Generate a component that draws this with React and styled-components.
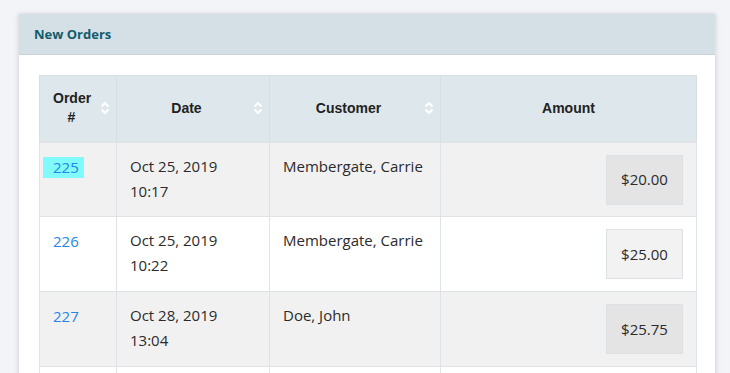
import styled, { createGlobalStyle } from 'styled-components';

const GlobalStyle = createGlobalStyle`
  body {
    margin: 0;
    background-color: #f3f4f8;
    font-family: 'Open Sans', 'Noto Sans', sans-serif;
  }
`;

const Page = styled.div`
  padding: 13px 13px 0 18px;
  height: 373px;
  box-sizing: border-box;
  overflow: hidden;
`;

const Card = styled.div`
  background-color: #fff;
  border: 1px solid #e1e3e6;
  border-bottom: none;
  border-radius: 3px 3px 0 0;
  box-shadow: 0 1px 5px rgba(0, 0, 0, 0.12);
  height: 400px;
  width: 698px;
  box-sizing: border-box;
`;

const CardHeader = styled.div`
  background-color: #d4e0e6;
  height: 41px;
  border-bottom: 1px solid #c7d3d9;
  box-sizing: border-box;
  padding: 0 15px;
  display: flex;
  align-items: center;
  font-size: 13px;
  font-weight: 700;
  color: #135a6b;
`;

const CardBody = styled.div`
  padding: 20px 20px 0 20px;
`;

const Table = styled.table`
  width: 657px;
  border-collapse: collapse;
  table-layout: fixed;
  font-size: 15px;
  color: #2b2b2b;
`;

const Th = styled.th`
  background-color: #dde7ec;
  border: 1px solid #d6dfe4;
  border-bottom: 2px solid #dfe3e8;
  height: 66px;
  padding: ${(props) => (props.sortable ? '0 26px 0 13px' : '0 13px')};
  font-family: 'Liberation Sans', Arial, sans-serif;
  font-size: 14px;
  font-weight: 700;
  color: #222;
  line-height: 19px;
  text-align: center;
  position: relative;
  box-sizing: border-box;
`;

const SortIcon = styled.svg`
  position: absolute;
  right: 6px;
  top: 50%;
  margin-top: -8px;
`;

const Row = styled.tr`
  background-color: ${(props) => (props.striped ? '#f1f1f1' : '#fff')};
`;

const Td = styled.td`
  border: 1px solid #dfe2e6;
  height: 75px;
  box-sizing: border-box;
  padding: 11px 13px 0 13px;
  vertical-align: top;
  line-height: 25px;
  text-align: ${(props) => props.align || 'left'};
`;

const OrderLink = styled.a`
  color: #2585e9;
  text-decoration: none;
  display: inline-block;
  line-height: 21px;
  margin-top: 3px;
  margin-left: ${(props) => (props.highlight ? '-10px' : '0')};
  padding: ${(props) => (props.highlight ? '0 5px 0 10px' : '0')};
  background-color: ${(props) => (props.highlight ? '#80fafa' : 'transparent')};
`;

const AmountButton = styled.div`
  display: inline-flex;
  align-items: center;
  justify-content: center;
  width: 77px;
  height: 50px;
  margin-top: 1px;
  box-sizing: border-box;
  border: 1px solid #dde1e6;
  background-color: rgba(0, 0, 0, 0.05);
  color: #2b2b2b;
  font-size: 15px;
`;

const Sort = () => (
  <SortIcon width="10" height="16" viewBox="0 0 10 16">
    <polyline points="1.5,6.5 5,3 8.5,6.5" fill="none" stroke="#fff" strokeWidth="2.2" />
    <polyline points="1.5,9.5 5,13 8.5,9.5" fill="none" stroke="#fff" strokeWidth="2.2" />
  </SortIcon>
);

const orders = [
  { id: 225, date: 'Oct 25, 2019', time: '10:17', customer: 'Membergate, Carrie', amount: '$20.00', highlight: true },
  { id: 226, date: 'Oct 25, 2019', time: '10:22', customer: 'Membergate, Carrie', amount: '$25.00' },
  { id: 227, date: 'Oct 28, 2019', time: '13:04', customer: 'Doe, John', amount: '$25.75' },
];

const App = () => {
  return (
    <Page>
      <GlobalStyle />
      <Card>
        <CardHeader>New Orders</CardHeader>
        <CardBody>
          <Table>
            <colgroup>
              <col style={{ width: 77 }} />
              <col style={{ width: 153 }} />
              <col style={{ width: 171 }} />
              <col style={{ width: 256 }} />
            </colgroup>
            <thead>
              <tr>
                <Th sortable>
                  Order
                  <br />#<Sort />
                </Th>
                <Th sortable>
                  Date
                  <Sort />
                </Th>
                <Th sortable>
                  Customer
                  <Sort />
                </Th>
                <Th>Amount</Th>
              </tr>
            </thead>
            <tbody>
              {orders.map((o, i) => (
                <Row key={o.id} striped={i % 2 === 0}>
                  <Td>
                    <OrderLink href="#" highlight={o.highlight}>
                      {o.id}
                    </OrderLink>
                  </Td>
                  <Td>
                    {o.date}
                    <br />
                    {o.time}
                  </Td>
                  <Td>{o.customer}</Td>
                  <Td align="right">
                    <AmountButton>{o.amount}</AmountButton>
                  </Td>
                </Row>
              ))}
              <Row>
                <Td />
                <Td />
                <Td />
                <Td />
              </Row>
            </tbody>
          </Table>
        </CardBody>
      </Card>
    </Page>
  );
};

export default App;
